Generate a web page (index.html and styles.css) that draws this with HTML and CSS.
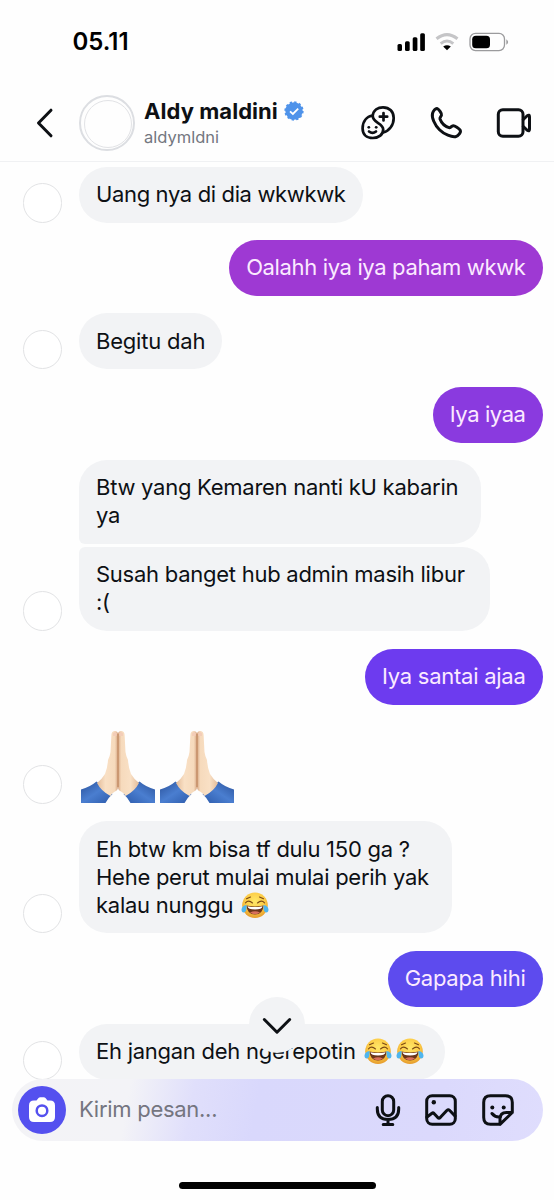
FILE: index.html
```html
<!DOCTYPE html>
<html lang="id">
<head>
<meta charset="utf-8">
<title>Aldy maldini</title>
<link rel="stylesheet" href="styles.css">
</head>
<body>
<svg class="defs" width="0" height="0" aria-hidden="true">
  <defs>
    <linearGradient id="skin" x1="0" x2="1" y1="0" y2="0">
      <stop offset="0" stop-color="#e3bb98"/><stop offset=".4" stop-color="#f9e0c5"/><stop offset=".85" stop-color="#f6dabc"/><stop offset="1" stop-color="#d6a683"/>
    </linearGradient>
    <linearGradient id="sleeve" x1="0" x2="1" y1="0" y2="1">
      <stop offset="0" stop-color="#2a519a"/><stop offset=".5" stop-color="#4a7ed0"/><stop offset="1" stop-color="#2d5bab"/>
    </linearGradient>
    <radialGradient id="face" cx=".5" cy=".35" r=".65">
      <stop offset="0" stop-color="#ffe868"/><stop offset=".6" stop-color="#fcca45"/><stop offset="1" stop-color="#e59a2c"/>
    </radialGradient>
    <symbol id="pray" viewBox="0 0 74 74">
      <g id="hand">
        <path d="M0 59.500Q9 57 15.500 51.500L31.500 64Q27 68 24.500 73H0Z" fill="url(#sleeve)"/>
        <path d="M37 3Q35.500.5 33.300 1Q30.500 1.500 30.400 5L29.500 22Q29 26 27 30Q26.500 38 24 44Q21 49 16 53Q20 61 29.500 66Q30.500 63 34 61.500Q37 60 37 57Z" fill="url(#skin)"/>
        <path d="M32 3.500Q34 1.200 36 3.500L35.500 6H32Z" fill="#f3cdb8"/>
      </g>
      <use href="#hand" transform="matrix(-1 0 0 1 74 0)"/>
      <path d="M37 4V57" stroke="#bd865d" stroke-width="1.100"/>
    </symbol>
    <symbol id="joy" viewBox="0 0 28 27">
      <circle cx="14" cy="13.300" r="12.800" fill="url(#face)"/>
      <path d="M4.500 10.800Q7.500 7.500 11.500 11M16.500 11Q20.500 7.500 23.500 10.800M5.500 6.800 9.500 5M18.500 5 22.500 6.800" fill="none" stroke="#7c4a16" stroke-width="1.100" stroke-linecap="round"/>
      <path d="M5.500 13.500Q14 15.500 22.500 13.500Q22 22.500 14 22.500T5.500 13.500Z" fill="#6b3519"/>
      <path d="M6.500 14.200Q14 16 21.500 14.200Q21 17.500 14 17.500T6.500 14.200Z" fill="#fff"/>
      <path d="M9 20.500Q14 18 19 20.500Q17 22.300 14 22.300T9 20.500Z" fill="#d9705a"/>
      <path d="M5.500 13Q1 13.500 .5 17.500Q.5 20.500 2.700 20.500Q6 20.500 5.500 13ZM22.500 13Q27 13.500 27.500 17.500Q27.500 20.500 25.300 20.500Q22 20.500 22.500 13Z" fill="#4fb5ee"/>
    </symbol>
  </defs>
</svg>

<main class="phone">
  <div class="status">
    <span class="clock">05.11</span>
    <svg class="status-icons" width="114" height="20" viewBox="0 0 114 20">
      <rect x="0.500" y="12" width="4.500" height="7" rx="1.500"/><rect x="8" y="9.200" width="4.700" height="9.800" rx="1.500"/><rect x="15.700" y="5.200" width="4.700" height="13.800" rx="1.500"/><rect x="23.200" y="1.300" width="4.700" height="17.700" rx="1.500"/>
      <g fill="none" stroke="#c5c5c7" stroke-width="3"><path d="M39.500 6.800Q50 -1.500 60.500 6.800"/><path d="M43.700 11.600Q50 6.500 56.300 11.600"/></g>
      <path d="M46.200 14.600Q50 11.800 53.800 14.600L50 18.300Z"/>
      <rect x="73" y="1.400" width="34.500" height="17.200" rx="5.500" fill="none" stroke="#9b9b9d" stroke-width="1.300"/>
      <rect x="75.200" y="3.700" width="17.800" height="12.600" rx="3.600"/>
      <path d="M109.300 7.200Q113 10 109.300 12.800Z" fill="#9b9b9d"/>
    </svg>
  </div>

  <header class="header">
    <svg class="back" width="18" height="30" viewBox="0 0 18 30"><path d="M15 2.200 2.500 15 15 27.800"/></svg>
    <div class="profile-pic"></div>
    <div class="who">
      <div class="name"><span>Aldy maldini</span>
        <svg width="20" height="20" viewBox="0 0 20 20"><circle cx="10" cy="10" r="8.700" fill="#4f93ea"/><circle cx="10" cy="10" r="8.700" fill="none" stroke="#4f93ea" stroke-width="1.900" stroke-dasharray="2.300 2.255"/><path d="m6 10.300 2.900 2.700 5.300-5.300" fill="none" stroke="#fff" stroke-width="1.800"/></svg>
      </div>
      <div class="handle">aldymldni</div>
    </div>
    <div class="actions">
      <svg class="reaction" width="36" height="36" viewBox="0 0 36 36">
        <path d="M12.700 10.500C13.500 5 18 2.300 23 2.300C29.500 2.300 33.700 6.700 33.700 13C33.700 20 29.500 26 23 27.500"/>
        <path d="M12.700 10.500C6.500 11.500 2.600 16.500 2.600 23.500C2.600 29.600 6.700 33 12.800 33S23.200 29.500 23.200 24.500C23.200 17.500 12.500 18.500 12.700 10.500Z"/>
        <path d="M23.500 8v7.400M19.800 11.700h7.400M9 26.500Q12.500 29.300 16 26.500"/>
        <circle class="dot" cx="8.800" cy="22.300" r="1.400"/><circle class="dot" cx="16.200" cy="22.300" r="1.400"/>
      </svg>
      <svg width="34" height="34" viewBox="0 0 34 34"><path d="M3.500 7.500C4.300 4.700 6.500 2 8.500 2.700C10 3.500 13 7.500 12.500 9C12.200 10.500 10.500 11.500 11 13C12.500 17 16 20.500 20 21.600C21.500 22 22.500 20 24 19.800C25.800 19.500 30 22.500 31.200 24.200C32.300 26 29.500 30 26.500 30.700C23 31.500 15 28.300 10.500 23.800C5.500 18.800 2.500 11.500 3.500 7.500Z"/></svg>
      <svg width="36" height="30" viewBox="0 0 36 30"><rect x="2.300" y="1.700" width="24.700" height="26.600" rx="4.500"/><path d="M27.300 11.500 31.200 7.700Q33.500 6.200 33.500 8.700V21.300Q33.500 23.800 31.200 22.300L27.300 18.500"/></svg>
    </div>
  </header>

  <section class="thread">
    <div class="row"><i class="avatar"></i><div class="bubble tight">Uang nya di dia wkwkwk</div></div>
    <div class="row mine"><div class="bubble tight c1">Oalahh iya iya paham wkwk</div></div>
    <div class="row"><i class="avatar"></i><div class="bubble loose">Begitu dah</div></div>
    <div class="row mine"><div class="bubble c2">Iya iyaa</div></div>
    <div class="row"><i class="avatar"></i>
      <div class="stack">
        <div class="bubble first">Btw yang Kemaren nanti kU kabarin<br>ya</div>
        <div class="bubble last">Susah banget hub admin masih libur<br>:(</div>
      </div>
    </div>
    <div class="row mine lower"><div class="bubble c3">Iya santai ajaa</div></div>
    <div class="row"><i class="avatar"></i>
      <div class="big-emoji"><svg role="img" aria-label="🙏🏻"><use href="#pray"/></svg><svg role="img" aria-label="🙏🏻"><use href="#pray"/></svg></div>
    </div>
    <div class="row"><i class="avatar"></i><div class="bubble triple">Eh btw km bisa tf dulu 150 ga ?<br>Hehe perut mulai mulai perih yak<br>kalau nunggu <svg class="emoji" role="img" aria-label="😂"><use href="#joy"/></svg></div></div>
    <div class="row mine"><div class="bubble c4">Gapapa hihi</div></div>
    <div class="row"><i class="avatar"></i><div class="bubble laughing">Eh jangan deh ngerepotin <svg class="emoji" role="img" aria-label="😂"><use href="#joy"/></svg><svg class="emoji next" role="img" aria-label="😂"><use href="#joy"/></svg></div></div>
    <div class="scroll-down"><svg width="32" height="20" viewBox="0 0 32 20"><path d="M3.300 4.500 16 17.200 28.700 4.500"/></svg></div>
  </section>

  <footer class="composer">
    <div class="camera"><svg width="26" height="26" viewBox="0 0 26 26"><path d="M5 3.500H7.500L9.500 1Q10.200.3 11.200.3H14.800Q15.800.3 16.500 1L18.500 3.500H21Q26 3.500 26 8.500V20Q26 25 21 25H5Q0 25 0 20V8.500Q0 3.500 5 3.500Z" fill="#fff"/><circle cx="13" cy="13.700" r="5.300" fill="none" stroke="#5450ef" stroke-width="2.500"/></svg></div>
    <span class="placeholder">Kirim pesan...</span>
    <div class="tools">
      <svg width="26" height="34" viewBox="0 0 26 34"><rect x="7.300" y="2.700" width="11.400" height="20" rx="5.700"/><path d="M2.300 14.500V16Q2.300 26.500 13 26.500T23.700 16V14.500M13 26.500V31.500M8.200 31.500H17.800"/></svg>
      <svg width="32" height="32" viewBox="0 0 32 32"><rect x="1.700" y="1.700" width="28.600" height="28.600" rx="5.500"/><circle class="dot" cx="8.800" cy="8.300" r="2.200"/><path d="M2 23 7 19.200Q8 18.500 9 19.400L12.800 23.600Q14 24.800 15.200 23.600L21.800 16.500Q23.500 15 25 16.700L30 22"/></svg>
      <svg width="32" height="32" viewBox="0 0 32 32"><path d="M18 30.300H8.500Q1.700 30.300 1.700 23.500V8.500Q1.700 1.700 8.500 1.700H23.500Q30.300 1.700 30.300 8.500V18.500L18 30.300V25Q18 18.500 24.500 18.500H30.300M10 19.500Q13 23.500 18.500 22.800"/><circle class="dot" cx="10.300" cy="13.500" r="2"/><circle class="dot" cx="21.700" cy="13.500" r="2"/></svg>
    </div>
  </footer>
  <div class="home-bar"></div>
</main>
</body>
</html>
```
FILE: styles.css
```css
* { box-sizing: border-box; }
body { margin: 0; background: #fefefe; font-family: Inter, "Liberation Sans", sans-serif; color: #0d1014; }
svg { display: block; flex: none; }
.defs { position: absolute; }
.phone { width: 554px; height: 1200px; display: flex; flex-direction: column; overflow: hidden; }

.status { height: 84px; flex: none; display: flex; align-items: center; justify-content: space-between; padding: 0 43px 1px 72.500px; }
.clock { font-size: 24px; font-weight: 600; color: #000; }

.header { height: 78px; flex: none; display: flex; align-items: center; padding: 0 22px 0 36px; border-bottom: 1px solid #f0f1f3; }
.header svg path, .header .actions rect { fill: none; }
.back { stroke: #0d1014; stroke-width: 3; stroke-linecap: round; stroke-linejoin: round; }
.profile-pic { width: 56px; height: 56px; margin-left: 25px; border: 2px solid #dcdee2; border-radius: 50%; padding: 3px; }
.profile-pic::before { content: ""; display: block; width: 46px; height: 46px; border: 1px solid #e2e3e6; border-radius: 50%; }
.who { margin-left: 9px; padding-top: 3px; }
.name { display: flex; align-items: center; gap: 6px; height: 27px; font-size: 22px; font-weight: 700; letter-spacing: .05px; white-space: nowrap; }
.handle { font-size: 16.500px; line-height: 27px; color: #737780; }
.actions { margin-left: auto; display: flex; align-items: center; gap: 33px; }
.actions svg, .tools svg { fill: none; stroke: #0d1014; stroke-width: 3; stroke-linecap: round; stroke-linejoin: round; }
.actions .reaction { stroke-width: 2.700; }
.actions .dot, .tools .dot { fill: #0d1014; stroke: none; }

.thread { position: relative; height: 917px; flex: none; display: flex; flex-direction: column; gap: 17.300px; padding: 4.700px 11.500px 0 22.500px; }
.row { display: flex; align-items: flex-end; flex: none; }
.mine { justify-content: flex-end; }
.lower { margin-top: .5px; }
.avatar { width: 39.500px; height: 39.500px; flex: none; margin-right: 17px; border: 1px solid #e2e3e5; border-radius: 50%; background: #fff; }
.bubble { padding: 13.300px 17px 14.700px; border-radius: 28px; background: #f2f3f5; font-size: 22px; line-height: 28px; letter-spacing: -.26px; white-space: nowrap; }
.bubble.tight { letter-spacing: -.36px; }
.bubble.loose { letter-spacing: -.2px; }
.mine .bubble { color: #fbeaff; }
.mine .c1 { background: #9e39d3; }
.mine .c2 { background: #8a3adf; letter-spacing: -.42px; }
.mine .c3 { background: #6d3bef; }
.mine .c4 { background: #5d4bee; }
.stack { display: flex; flex-direction: column; align-items: flex-start; gap: 3px; }
.first { width: 401.500px; border-bottom-left-radius: 6px; }
.last { width: 411px; border-top-left-radius: 6px; }
.triple { width: 373px; }
.laughing { width: 366px; }
.emoji { display: inline-block; width: 28px; height: 27px; margin-left: 2px; vertical-align: -6px; }
.next { margin-left: 4.500px; }
.big-emoji { display: flex; gap: 5px; height: 82.300px; padding: 8px 0 0 2px; }
.big-emoji svg { width: 74px; height: 74px; }
.scroll-down { position: absolute; left: 249px; top: 835px; width: 56px; height: 56px; border-radius: 50%; background: #f2f3f5; display: grid; place-items: center; }
.scroll-down path { fill: none; stroke: #0d1014; stroke-width: 3; stroke-linecap: round; stroke-linejoin: round; }

.composer { position: relative; height: 62px; flex: none; margin: 0 11.500px 0 12px; padding: 0 29px 0 6px; border-radius: 31px; display: flex; align-items: center; background: linear-gradient(100deg, #f3f3f6 0, #f3f3f7 22%, #e0dffb 34%, #d9d8fc 46%, #dbd9fc 80%, #dfddfd 100%); }
.camera { width: 48px; height: 48px; flex: none; border-radius: 50%; background: #5450ef; display: grid; place-items: center; }
.placeholder { margin-left: 13px; padding-bottom: 2px; font-size: 22px; letter-spacing: -.28px; color: #747580; }
.tools { margin-left: auto; display: flex; align-items: center; gap: 24.500px; }
.home-bar { width: 197px; height: 7px; flex: none; margin: 41px 0 0 179px; border-radius: 4px; background: #000; }
```
